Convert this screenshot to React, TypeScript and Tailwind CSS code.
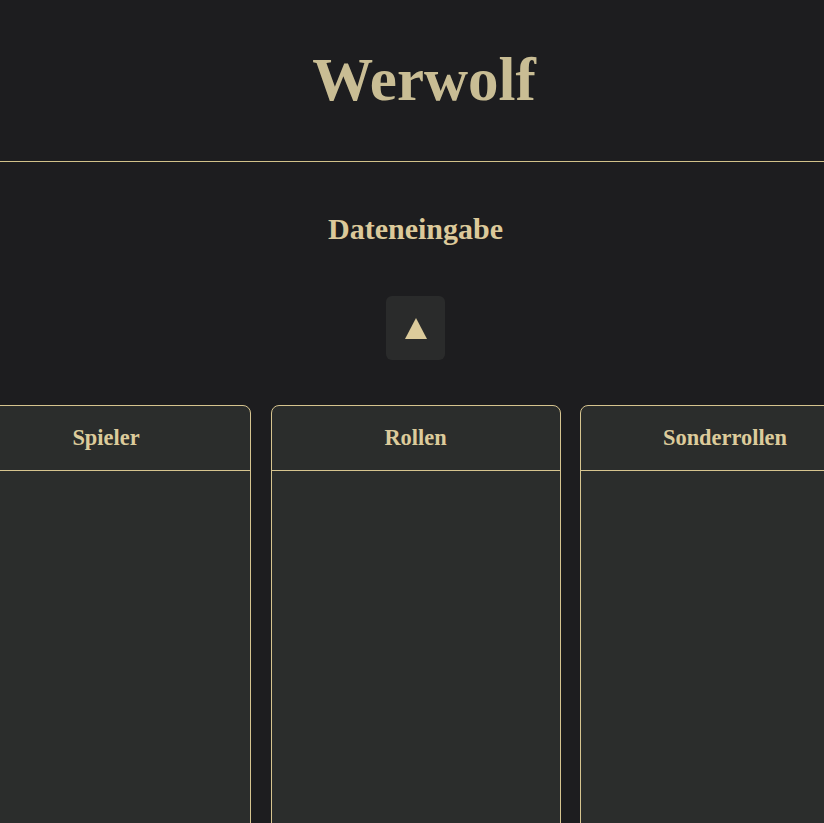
import React from "react";

const serif = { fontFamily: '"Liberation Serif", "Times New Roman", serif' };

function Card({ title }: { title: string }) {
  return (
    <div className="w-[290px] h-[520px] shrink-0 rounded-lg border border-[#d6c48f] bg-[#2b2d2c] flex flex-col">
      <div className="h-[65px] shrink-0 border-b border-[#d6c48f] flex items-center justify-center">
        <h3 className="text-[22.4px] font-bold text-[#dccb9b]" style={serif}>
          {title}
        </h3>
      </div>
      <div className="flex-1" />
    </div>
  );
}

export default function App() {
  return (
    <div className="min-h-screen bg-[#1d1d1f] overflow-hidden" style={serif}>
      <header className="h-[162px] border-b border-[#d2c28a] flex items-center justify-center pl-[24px]">
        <h1 className="text-[61px] leading-none font-bold text-[#c9bd94] -mt-[2px]">Werwolf</h1>
      </header>
      <main className="flex flex-col items-center pl-[7px]">
        <h2 className="mt-[49px] text-[30px] leading-[36px] font-bold text-[#dcc99a]">Dateneingabe</h2>
        <button className="mt-[49px] w-[59px] h-[64px] rounded-md bg-[#2a2b2b] flex items-center justify-center">
          <svg width="22" height="21" viewBox="0 0 22 21">
            <polygon points="11,0 22,21 0,21" fill="#dccb9b" />
          </svg>
        </button>
        <div className="mt-[45px] flex gap-[19.5px] justify-center w-full">
          <Card title="Spieler" />
          <Card title="Rollen" />
          <Card title="Sonderrollen" />
        </div>
      </main>
    </div>
  );
}
